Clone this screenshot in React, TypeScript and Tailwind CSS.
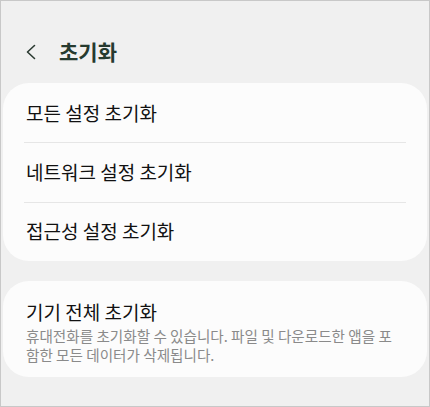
export default function App() {
  const font = { fontFamily: '"Noto Sans CJK KR", "Noto Sans", sans-serif' };
  return (
    <div
      className="w-[430px] h-[407px] bg-[#f0f0f0] border border-[#c8c8c8] flex flex-col overflow-hidden"
      style={font}
    >
      <div className="flex items-center h-[82px] pl-[24px] pt-[19px]">
        <svg width="12" height="16" viewBox="0 0 12 16" className="text-[#2b3a32]">
          <path d="M9.5 1.5 L2.5 8 L9.5 14.5" fill="none" stroke="currentColor" strokeWidth="1.6" strokeLinecap="round" strokeLinejoin="round" />
        </svg>
        <span className="ml-[22px] text-[21px] font-bold text-[#263a2f] leading-none">초기화</span>
      </div>
      <div className="mx-[2px] bg-[#fcfcfc] rounded-[26px] flex flex-col px-[21px]">
        <div className="h-[59px] flex items-center text-[19px] text-[#111] pl-[2px] pt-[2px]">모든 설정 초기화</div>
        <div className="h-px bg-[#e6e6e6]" />
        <div className="h-[59px] flex items-center text-[19px] text-[#111] pl-[2px]">네트워크 설정 초기화</div>
        <div className="h-px bg-[#e6e6e6]" />
        <div className="h-[58px] flex items-center text-[19px] text-[#111] pl-[2px] pb-[1px]">접근성 설정 초기화</div>
      </div>
      <div className="mt-[20px] mx-[2px] bg-[#fcfcfc] rounded-[26px] pl-[23px] pr-[25px] pt-[17px] pb-[13px]">
        <div className="text-[19px] text-[#111] leading-[27px]">기기 전체 초기화</div>
        <div className="text-[14.6px] text-[#8a8a8a] leading-[19px] mt-[1px] break-all">
          휴대전화를 초기화할 수 있습니다. 파일 및 다운로드한 앱을 포함한 모든 데이터가 삭제됩니다.
        </div>
      </div>
    </div>
  );
}
